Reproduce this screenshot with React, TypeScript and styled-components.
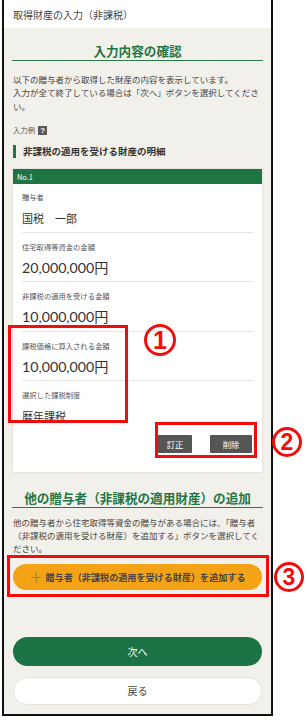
import React from "react";
import styled, { createGlobalStyle } from "styled-components";

const GlobalStyle = createGlobalStyle`
  html, body { margin: 0; padding: 0; background: #fff; }
  body { font-family: "Noto Sans CJK JP", "Noto Sans", sans-serif; }
  * { box-sizing: border-box; }
`;

const Page = styled.div`
  position: relative;
  width: 307px;
  height: 721px;
  overflow: hidden;
  background: #fff;
`;

const Frame = styled.div`
  margin-left: 2px;
  width: 271px;
  height: 716px;
  border-left: 2px solid #111;
  border-right: 2px solid #111;
  border-bottom: 2px solid #111;
  background: #f1f0ea;
  display: flex;
  flex-direction: column;
`;

const Header = styled.div`
  height: 28px;
  background: #fff;
  display: flex;
  align-items: center;
  padding-left: 9px;
  font-size: 10px;
  color: #444;
`;

const Content = styled.div`
  padding: 0 9px;
  display: flex;
  flex-direction: column;
`;

const Title = styled.h2<{ $top: number }>`
  margin: ${(p) => p.$top}px -1px 0;
  padding-bottom: 1px;
  border-bottom: 1.5px solid #2a7a48;
  text-align: center;
  font-size: 12.6px;
  line-height: 16px;
  font-weight: 700;
  color: #237544;
`;

const Para = styled.div<{ $top: number }>`
  margin-top: ${(p) => p.$top}px;
  display: flex;
  flex-direction: column;
  font-size: 8.5px;
  color: #444;
`;

const ParaLine = styled.span`
  display: block;
  height: 13.4px;
  line-height: 13.4px;
  white-space: nowrap;
`;

const ExampleRow = styled.div`
  margin-top: 11px;
  display: flex;
  align-items: center;
  gap: 3px;
  font-size: 7.4px;
  line-height: 12px;
  color: #555;
`;

const HelpIcon = styled.span`
  width: 9px;
  height: 9px;
  background: #595959;
  color: #fff;
  font-family: "Liberation Sans", sans-serif;
  font-weight: 700;
  font-size: 8px;
  line-height: 9px;
  text-align: center;
`;

const SectionHead = styled.h3`
  margin: 9px 0 0;
  padding-left: 7px;
  border-left: 3px solid #237544;
  font-size: 9.5px;
  line-height: 13px;
  font-weight: 700;
  color: #333;
`;

const Card = styled.div`
  margin-top: 11px;
  background: #fff;
  box-shadow: 0 0 2px rgba(0, 0, 0, 0.14);
  display: flex;
  flex-direction: column;
`;

const CardHead = styled.div`
  height: 15px;
  background: #1f7444;
  color: #fff;
  font-size: 7.4px;
  line-height: 15px;
  padding-left: 4px;
`;

const CardBody = styled.div`
  padding: 0 9px 19px;
  display: flex;
  flex-direction: column;
`;

const Field = styled.div<{ $first?: boolean; $last?: boolean }>`
  padding: ${(p) => (p.$first ? 8 : 9)}px 0 4.5px;
  border-bottom: ${(p) => (p.$last ? "none" : "1px solid #e4e4e4")};
`;

const Label = styled.div`
  font-size: 7.3px;
  line-height: 10px;
  color: #555;
`;

const Value = styled.div<{ $num?: boolean }>`
  margin-top: 7px;
  font-size: ${(p) => (p.$num ? 14.2 : 11)}px;
  line-height: 18px;
  color: #333;
  font-family: ${(p) =>
    p.$num ? `"Lato", "Noto Sans CJK JP", sans-serif` : `"Noto Sans CJK JP", sans-serif`};
`;

const ButtonRow = styled.div`
  margin-top: 5px;
  display: flex;
  justify-content: flex-end;
  gap: 18px;
  padding-right: 1px;
`;

const SmallBtn = styled.button<{ $w: number }>`
  width: ${(p) => p.$w}px;
  height: 18px;
  border: none;
  border-radius: 1px;
  background: #555;
  color: #fff;
  font-family: "Noto Sans CJK JP", sans-serif;
  font-size: 8.4px;
  padding: 0;
`;

const PillButton = styled.button<{ $variant: "orange" | "green" | "white"; $top: number; $h: number }>`
  margin-top: ${(p) => p.$top}px;
  height: ${(p) => p.$h}px;
  width: 100%;
  border-radius: 999px;
  font-family: "Noto Sans CJK JP", sans-serif;
  padding: 0;
  display: flex;
  align-items: center;
  justify-content: center;
  gap: 3px;
  background: ${(p) =>
    p.$variant === "orange" ? "#f5a316" : p.$variant === "green" ? "#1b7345" : "#fff"};
  color: ${(p) => (p.$variant === "green" ? "#fff" : "#444")};
  border: ${(p) => (p.$variant === "white" ? "1px solid #e6e4da" : "none")};
  font-weight: ${(p) => (p.$variant === "orange" ? 700 : 400)};
  font-size: ${(p) => (p.$variant === "orange" ? 9.1 : 10)}px;
`;

const Plus = styled.span`
  font-weight: 300;
  font-size: 13px;
  color: #666;
  line-height: 1;
`;

const RedBox = styled.div<{ $x: number; $y: number; $w: number; $h: number }>`
  position: absolute;
  left: ${(p) => p.$x}px;
  top: ${(p) => p.$y}px;
  width: ${(p) => p.$w}px;
  height: ${(p) => p.$h}px;
  border: 3px solid #f20d0d;
  pointer-events: none;
`;

const Marker = styled.div<{ $x: number; $y: number; $s: number }>`
  position: absolute;
  left: ${(p) => p.$x}px;
  top: ${(p) => p.$y}px;
  width: ${(p) => p.$s}px;
  height: ${(p) => p.$s}px;
  border: 3px solid #f20d0d;
  border-radius: 50%;
  color: #f20d0d;
  font-family: "Liberation Sans", sans-serif;
  font-weight: 700;
  font-size: ${(p) => Math.round(p.$s * 0.78)}px;
  line-height: ${(p) => p.$s - 6}px;
  text-align: center;
`;

const fields = [
  { label: "贈与者", value: "国税　一郎", num: false },
  { label: "住宅取得等資金の金額", value: "20,000,000円", num: true },
  { label: "非課税の適用を受ける金額", value: "10,000,000円", num: true },
  { label: "課税価格に算入される金額", value: "10,000,000円", num: true },
  { label: "選択した課税制度", value: "暦年課税", num: false },
];

const introLines = [
  "以下の贈与者から取得した財産の内容を表示しています。",
  "入力が全て終了している場合は「次へ」ボタンを選択してくださ",
  "い。",
];

const addLines = [
  "他の贈与者から住宅取得等資金の贈与がある場合には、「贈与者",
  "（非課税の適用を受ける財産）を追加する」ボタンを選択してく",
  "ださい。",
];

export default function App() {
  return (
    <Page>
      <GlobalStyle />
      <Frame>
        <Header>取得財産の入力（非課税）</Header>
        <Content>
          <Title $top={15}>入力内容の確認</Title>
          <Para $top={12}>
            {introLines.map((l) => (
              <ParaLine key={l}>{l}</ParaLine>
            ))}
          </Para>
          <ExampleRow>
            入力例<HelpIcon>?</HelpIcon>
          </ExampleRow>
          <SectionHead>非課税の適用を受ける財産の明細</SectionHead>
          <Card>
            <CardHead>No.1</CardHead>
            <CardBody>
              {fields.map((f, i) => (
                <Field key={f.label} $first={i === 0} $last={i === fields.length - 1}>
                  <Label>{f.label}</Label>
                  <Value $num={f.num}>{f.value}</Value>
                </Field>
              ))}
              <ButtonRow>
                <SmallBtn $w={34}>訂正</SmallBtn>
                <SmallBtn $w={42}>削除</SmallBtn>
              </ButtonRow>
            </CardBody>
          </Card>
          <Title $top={18}>他の贈与者（非課税の適用財産）の追加</Title>
          <Para $top={8}>
            {addLines.map((l) => (
              <ParaLine key={l}>{l}</ParaLine>
            ))}
          </Para>
          <PillButton $variant="orange" $top={8} $h={26}>
            <Plus>＋</Plus>贈与者（非課税の適用を受ける財産）を追加する
          </PillButton>
          <PillButton $variant="green" $top={47} $h={29}>
            次へ
          </PillButton>
          <PillButton $variant="white" $top={11} $h={28}>
            戻る
          </PillButton>
        </Content>
      </Frame>
      <RedBox $x={8} $y={325} $w={120} $h={98} />
      <Marker $x={144} $y={324} $s={32}>1</Marker>
      <RedBox $x={155} $y={422} $w={102} $h={36} />
      <Marker $x={272} $y={427} $s={30}>2</Marker>
      <RedBox $x={7} $y={555} $w={262} $h={42} />
      <Marker $x={274} $y={562} $s={30}>3</Marker>
    </Page>
  );
}
